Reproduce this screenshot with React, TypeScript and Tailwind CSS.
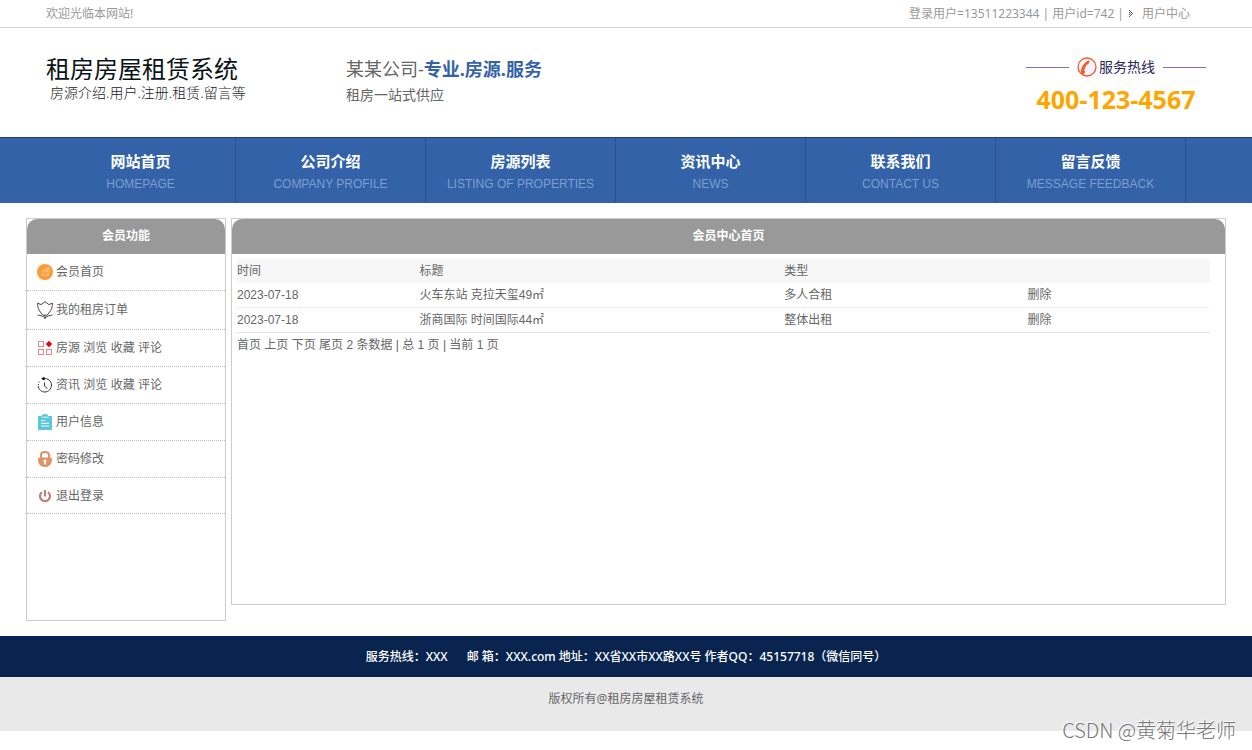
import type { ReactNode } from 'react'

const arial = "font-['Liberation_Sans','Noto_Sans_CJK_SC',sans-serif]"
const yahei = "font-['Noto_Sans','Noto_Sans_CJK_SC',sans-serif]"

const navItems = [
  { zh: '网站首页', en: 'HOMEPAGE' },
  { zh: '公司介绍', en: 'COMPANY PROFILE' },
  { zh: '房源列表', en: 'LISTING OF PROPERTIES' },
  { zh: '资讯中心', en: 'NEWS' },
  { zh: '联系我们', en: 'CONTACT US' },
  { zh: '留言反馈', en: 'MESSAGE FEEDBACK' },
]

const records = [
  { date: '2023-07-18', title: '火车东站 克拉天玺49㎡', type: '多人合租', line: 'border-dotted' },
  { date: '2023-07-18', title: '浙商国际 时间国际44㎡', type: '整体出租', line: 'border-solid' },
]

const HomeIcon = () => (
  <svg width="16" height="16" viewBox="0 0 16 16">
    <circle cx="8" cy="8" r="8" fill="#ff9933" />
    <path d="M4 8.2 8.4 4.6 12 3.4 11.4 11.6H5.2V8.4" fill="#ffb466" stroke="#ffcf99" strokeWidth="0.7" />
    <path d="M7.2 11.6V8.8h2v2.8" fill="none" stroke="#ff9933" strokeWidth="0.9" />
  </svg>
)

const TulipIcon = () => (
  <svg width="16" height="18" viewBox="0 0 16 18" fill="none" stroke="#444" strokeWidth="1">
    <path d="M.6 2.2 4.2 3.600 8 .6l3.800 3 3.600-1.400" />
    <path d="M.6 2.200C.5 5.500 1.200 8 2.600 10c1 1.500 2.200 2.600 3.200 4.200h4.400c1-1.600 2.200-2.700 3.200-4.200 1.400-2 2.100-4.500 2-7.800" />
    <path d="M8 14v4M.6 14.200c2.800 0 5 .8 7.400 2.800 2.400-2 4.600-2.800 7.400-2.800" />
  </svg>
)

const GridIcon = () => (
  <svg width="16" height="16" viewBox="0 0 16 16">
    <g fill="none" stroke="#f0838c" strokeWidth="1">
      <rect x="1.500" y="1.500" width="5" height="5" />
      <rect x="1.500" y="9.500" width="5" height="5" />
      <rect x="9.500" y="9.500" width="5" height="5" />
    </g>
    <path d="m12 .8 3.200 3.200L12 7.200 8.800 4z" fill="#e60012" />
  </svg>
)

const HistoryIcon = () => (
  <svg width="16" height="16" viewBox="0 0 16 16" fill="none" stroke="#333" strokeWidth="1">
    <path d="M6.500 1.700c4.500-.8 8 2.400 8 6.300 0 3.800-3 7-6.700 7-3.500 0-6.300-2.600-6.500-6" />
    <path d="M1.300 8c0-1.500.5-2.800 1.500-4" strokeDasharray="1 1.500" />
    <path d="M7.500 5.500V9l3 2.500" />
    <path d="M4 1.800 7.500-.2v3.800z" fill="#000" stroke="none" />
  </svg>
)

const ClipboardIcon = () => (
  <svg width="16" height="16" viewBox="0 0 16 16">
    <path d="M1 2h3.500c.3-1.200 1.500-2 3.500-2s3.200.8 3.500 2H15v14H1z" fill="#5bc8d8" />
    <path d="M4.500 3.200h7" stroke="#c9eef3" strokeWidth="1.200" />
    <path d="M4 6.500h4M4 9.300h8M4 12h8" stroke="#e9fafc" strokeWidth="1.200" />
  </svg>
)

const LockIcon = () => (
  <svg width="16" height="16" viewBox="0 0 16 16">
    <path d="M4 7V4.200C4 2 5.500 1 8 1s4 1 4 3.200V7" fill="none" stroke="#df9468" strokeWidth="2" />
    <path d="M1.500 6.500h13c.6 1.500.6 3.500 0 5C13.500 14.300 11.500 16 8 16s-5.500-1.700-6.500-4.500c-.6-1.500-.6-3.500 0-5z" fill="#df9468" />
    <path d="M8 8.500a1.500 1.500 0 0 0-.8 2.800V13.500h1.600v-2.200A1.500 1.500 0 0 0 8 8.500z" fill="#fff" />
  </svg>
)

const PowerIcon = () => (
  <svg width="16" height="16" viewBox="0 0 16 16" fill="none" stroke="#b98080" strokeWidth="2.200">
    <path d="M5 4.200a5 5 0 1 0 6 0" />
    <path d="M8 2v6.500" />
  </svg>
)

const PhoneIcon = () => (
  <svg width="20" height="20" viewBox="0 0 20 20">
    <circle cx="10" cy="10" r="9" fill="#f4f3ff" stroke="#f15a24" strokeWidth="1.300" />
    <path
      d="M12.700 3 11.400 7.200 9.600 7.800C8.400 9.700 7.600 11.700 7.100 13.600L8.400 14.800 6.200 18C4 16.800 3.500 14.600 4.200 12.200 5.300 8.200 8.200 4.700 12.700 3z"
      fill="#f15a24"
    />
  </svg>
)

const menu: { label: string; icon: ReactNode; height: string }[] = [
  { label: '会员首页', icon: <HomeIcon />, height: 'h-[37px]' },
  { label: '我的租房订单', icon: <TulipIcon />, height: 'h-[39px]' },
  { label: '房源 浏览 收藏 评论', icon: <GridIcon />, height: 'h-[37px]' },
  { label: '资讯 浏览 收藏 评论', icon: <HistoryIcon />, height: 'h-[37px]' },
  { label: '用户信息', icon: <ClipboardIcon />, height: 'h-[37px]' },
  { label: '密码修改', icon: <LockIcon />, height: 'h-[37px]' },
  { label: '退出登录', icon: <PowerIcon />, height: 'h-[36px]' },
]

function TopBar() {
  return (
    <div className="border-b border-[#d6d6d6]">
      <div className={`${yahei} max-w-[1160px] mx-auto h-[27px] pr-4 flex items-center justify-between text-xs text-[#999]`}>
        <span>欢迎光临本网站!</span>
        <div className="flex items-center gap-1">
          <span>登录用户=13511223344 | 用户id=742 |</span>
          <svg width="6" height="9" viewBox="0 0 6 9" fill="none" stroke="#555" strokeWidth="1">
            <path d="M1 1l3.500 3.500L1 8M1 3l1.500 1.500L1 6" />
          </svg>
          <a href="#" className="ml-1">用户中心</a>
        </div>
      </div>
    </div>
  )
}

function Header() {
  return (
    <header className={`${yahei} max-w-[1160px] mx-auto h-[109px] flex items-start justify-between`}>
      <div className="flex">
        <div className="w-[300px] pt-6">
          <h1 className="text-2xl leading-[34px] text-[#0b1215]">租房房屋租赁系统</h1>
          <p className="pl-1 text-sm leading-[14px] font-light text-[#222]">房源介绍.用户.注册.租赁.留言等</p>
        </div>
        <div className="pt-[27px] text-[#666]">
          <p className="text-lg leading-7">
            某某公司-<strong className="font-bold text-[#3362a9]">专业.房源.服务</strong>
          </p>
          <p className="text-sm leading-6">租房一站式供应</p>
        </div>
      </div>
      <div className="w-[180px] pt-[27px]">
        <div className="flex items-center gap-2">
          <span className="flex-1 h-px bg-[#7a78b8]" />
          <span className="flex items-center gap-[2px] text-sm leading-6 text-[#2b2858]">
            <PhoneIcon />
            服务热线
          </span>
          <span className="flex-1 h-px bg-[#7a78b8]" />
        </div>
        <p className="text-center text-[25px] leading-10 font-bold text-[#ffa500]">400-123-4567</p>
      </div>
    </header>
  )
}

function NavBar() {
  return (
    <nav className="bg-[#3362a9] border-t border-[#203f6f]">
      <ul className="max-w-[1160px] mx-auto h-[65px] flex">
        {navItems.map((item) => (
          <li key={item.en} className="w-[190px] border-r border-[#28528f]">
            <a href="#" className="block pt-3 text-center">
              <span className="block text-[15px] leading-6 font-bold text-white">{item.zh}</span>
              <span className="block text-xs leading-5 text-[#7f9dcb]">{item.en}</span>
            </a>
          </li>
        ))}
      </ul>
    </nav>
  )
}

function Sidebar() {
  return (
    <aside className="w-[200px] shrink-0 min-h-[403px] border border-[#ccc]">
      <h2 className="h-[35px] rounded-t-[10px] bg-[#999] text-center leading-[34px] font-bold text-white">会员功能</h2>
      <ul>
        {menu.map((m) => (
          <li key={m.label} className={`${m.height} border-b border-dotted border-[#bbb]`}>
            <a href="#" className="h-full pl-[10px] flex items-center gap-[3px]">
              {m.icon}
              {m.label}
            </a>
          </li>
        ))}
      </ul>
    </aside>
  )
}

function MemberPanel() {
  return (
    <section className="flex-1 self-start min-h-[387px] border border-[#ccc]">
      <h2 className="h-[35px] rounded-t-[10px] bg-[#999] text-center leading-[34px] font-bold text-white">会员中心首页</h2>
      <div className="pt-[5px] pl-[5px] pr-[15px]">
        <table className="w-full table-fixed border-separate border-spacing-0 text-left">
          <thead>
            <tr className="h-6 bg-[#f7f7f7]">
              <th className="w-3/16 p-0 font-normal">时间</th>
              <th className="w-6/16 p-0 font-normal">标题</th>
              <th className="w-4/16 p-0 font-normal">类型</th>
              <th className="w-3/16 p-0" />
            </tr>
          </thead>
          <tbody>
            {records.map((r) => (
              <tr key={r.title}>
                <td className={`h-[25px] p-0 border-b border-[#e4e4e4] ${r.line}`}>{r.date}</td>
                <td className={`h-[25px] p-0 border-b border-[#e4e4e4] ${r.line}`}>{r.title}</td>
                <td className={`h-[25px] p-0 border-b border-[#e4e4e4] ${r.line}`}>{r.type}</td>
                <td className={`h-[25px] p-0 border-b border-[#e4e4e4] ${r.line}`}>
                  <a href="#">删除</a>
                </td>
              </tr>
            ))}
          </tbody>
        </table>
        <p className="leading-6">
          <a href="#">首页</a> <a href="#">上页</a> <a href="#">下页</a> <a href="#">尾页</a> 2 条数据 | 总 1 页 | 当前 1 页
        </p>
      </div>
    </section>
  )
}

export default function App() {
  return (
    <div className={`${arial} relative min-h-screen bg-white text-xs text-[#666]`}>
      <TopBar />
      <Header />
      <NavBar />
      <main className="max-w-[1200px] mx-auto py-[15px] flex gap-[5px]">
        <Sidebar />
        <MemberPanel />
      </main>
      <footer className={`${yahei} text-center`}>
        <p className="bg-[#08244f] leading-[41px] font-medium text-white">
          服务热线：XXX <span className="ml-4">邮 箱：XXX.com 地址：XX省XX市XX路XX号 作者QQ：45157718（微信同号）</span>
        </p>
        <p className="h-[54px] pt-3 bg-[#e9e9e9] leading-5">版权所有@租房房屋租赁系统</p>
      </footer>
      <span className="font-['Noto_Sans_CJK_SC',sans-serif] absolute right-4 bottom-1 text-xl leading-8 font-light text-[#777] [text-shadow:-1px_-1px_0_#fff]">
        CSDN @黄菊华老师
      </span>
    </div>
  )
}
